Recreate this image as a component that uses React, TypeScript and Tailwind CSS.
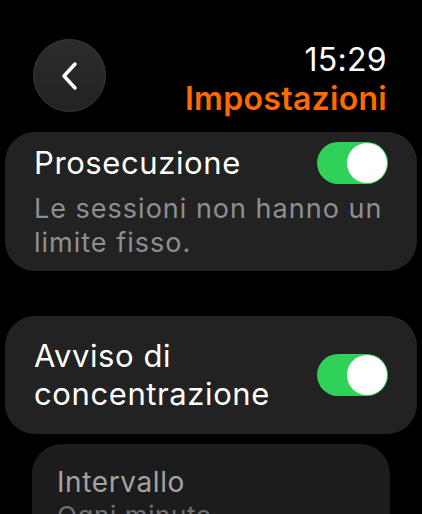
import React from "react";

function Toggle() {
  return (
    <div className="flex h-[42px] w-[71px] shrink-0 items-center justify-end rounded-full bg-[#30d158] p-[1px]">
      <div className="h-[40px] w-[40px] rounded-full bg-white" />
    </div>
  );
}

export default function App() {
  return (
    <div className="h-[514px] w-[422px] overflow-hidden bg-black font-['Inter',sans-serif] text-white">
      <header className="flex items-start justify-between pl-[33px] pr-[35px] pt-[39px]">
        <button
          type="button"
          className="flex h-[73px] w-[73px] items-center justify-center rounded-full border border-[#3a3a3a] bg-gradient-to-b from-[#2c2c2c] to-[#222222]"
        >
          <svg width="20" height="30" viewBox="0 0 20 30" fill="none">
            <path
              d="M15 3 L4 15 L15 27"
              stroke="white"
              strokeWidth="3.5"
              strokeLinecap="round"
              strokeLinejoin="round"
            />
          </svg>
        </button>
        <div className="mt-[1px] flex flex-col items-end">
          <span className="text-[32px] leading-[40px] tracking-[0.3px]">15:29</span>
          <span className="text-[32px] font-semibold leading-[38px] tracking-[0.3px] text-[#ff6a00]">
            Impostazioni
          </span>
        </div>
      </header>

      <div className="mx-[5px] mt-[14px] rounded-[30px] bg-[#222222] pb-[11px] pl-[29px] pr-[29px] pt-[10px]">
        <div className="flex items-center justify-between">
          <span className="text-[31px] leading-[42px] tracking-[0.6px]">Prosecuzione</span>
          <Toggle />
        </div>
        <p className="mt-[8px] text-[27px] leading-[34px] tracking-[1px] text-[#8e8e93]">
          Le sessioni non hanno un limite fisso.
        </p>
      </div>

      <div className="mx-[5px] mt-[45px] flex items-center justify-between rounded-[30px] bg-[#222222] py-[21px] pl-[29px] pr-[29px]">
        <span className="text-[31px] leading-[38px] tracking-[0.6px]">
          Avviso di
          <br />
          concentrazione
        </span>
        <Toggle />
      </div>

      <div className="mx-[32px] mt-[10px] h-[120px] rounded-[30px] bg-[#1c1c1c] px-[25px] pt-[20px]">
        <p className="text-[28px] leading-[36px] tracking-[0.6px] text-[#a3a3a3]">Intervallo</p>
        <p className="text-[26px] leading-[32px] tracking-[0.6px] text-[#6e6e73]">Ogni minuto</p>
      </div>
    </div>
  );
}
